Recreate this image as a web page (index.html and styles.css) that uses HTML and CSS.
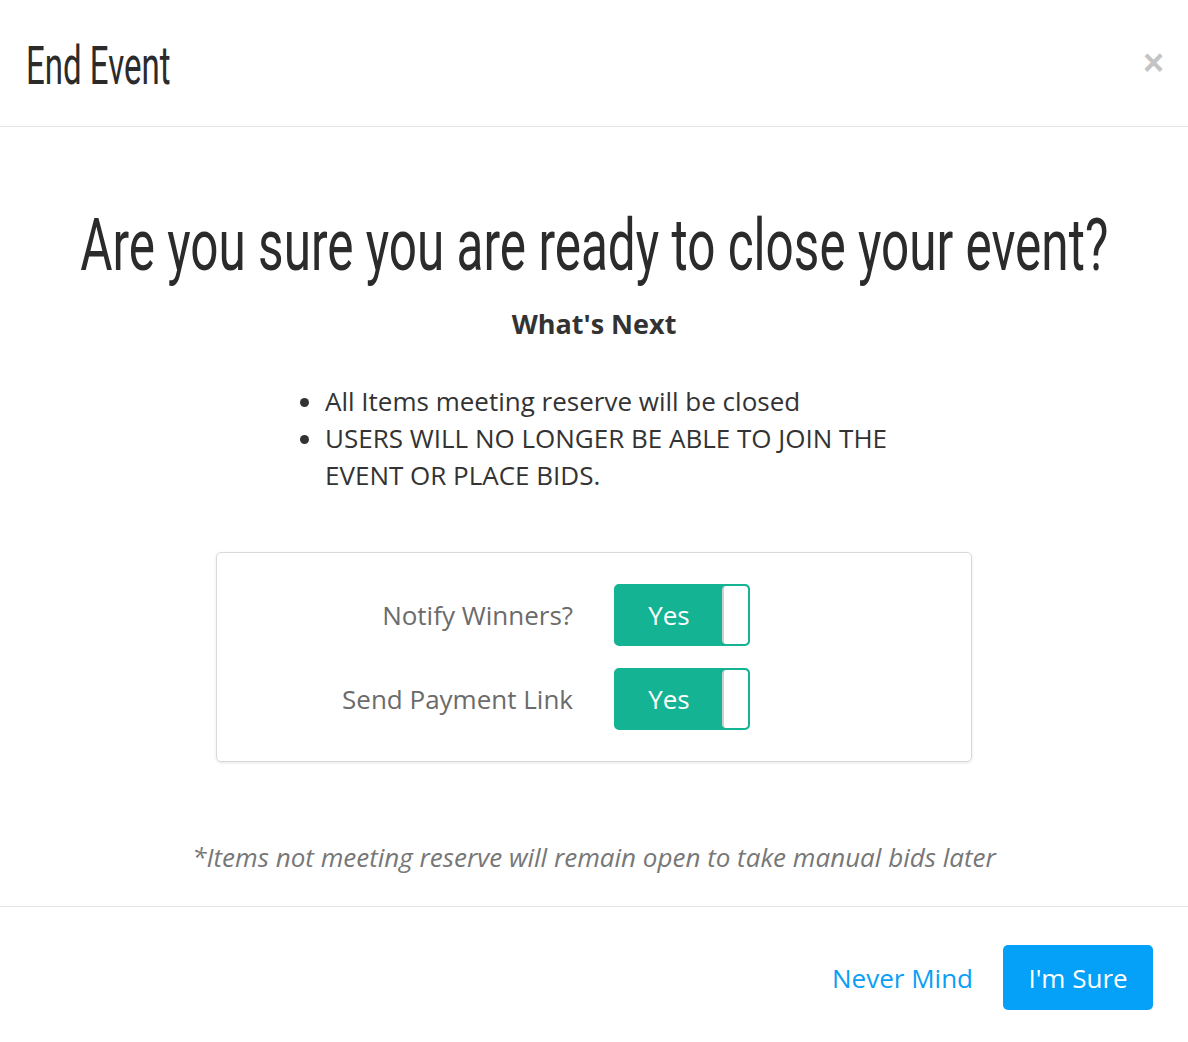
FILE: index.html
```html
<!DOCTYPE html>
<html>
<head>
    <title>End Event</title>
    <link rel="stylesheet" href="styles.css">
</head>
<body>
    <div class="modal">
        <div class="modal-header">
            <h2 class="modal-title"><span class="narrow">End Event</span></h2>
            <button class="close">&times;</button>
        </div>

        <div class="modal-body">
            <h1 class="confirm-title"><span class="narrow">Are you sure you are ready to close your event?</span></h1>
            <h4 class="next-title">What's Next</h4>

            <ul class="next-list">
                <li>All Items meeting reserve will be closed</li>
                <li>USERS WILL NO LONGER BE ABLE TO JOIN THE EVENT OR PLACE BIDS.</li>
            </ul>

            <div class="options">
                <div class="option-row">
                    <span class="option-label">Notify Winners?</span>
                    <div class="toggle">
                        <span class="toggle-on">Yes</span>
                        <span class="toggle-knob"></span>
                    </div>
                </div>
                <div class="option-row">
                    <span class="option-label">Send Payment Link</span>
                    <div class="toggle">
                        <span class="toggle-on">Yes</span>
                        <span class="toggle-knob"></span>
                    </div>
                </div>
            </div>

            <p class="footnote">*Items not meeting reserve will remain open to take manual bids later</p>
        </div>

        <div class="modal-footer">
            <button class="btn-link">Never Mind</button>
            <button class="btn-primary">I'm Sure</button>
        </div>
    </div>
</body>
</html>
```

FILE: styles.css
```css
body {
    margin: 0;
    font-family: "Open Sans", Arial, sans-serif;
    color: #333;
    background: #fff;
}

.modal { width: 1188px; }

.narrow {
    display: inline-block;
    white-space: nowrap;
    font-family: Roboto, "Liberation Sans", sans-serif;
    font-weight: 400;
}

.modal-header {
    display: flex;
    align-items: center;
    justify-content: space-between;
    height: 127px;
    padding: 3px 26px 0;
    box-sizing: border-box;
    border-bottom: 1px solid #e5e5e5;
}
.modal-title {
    margin: 0;
    font-size: 53px;
    font-weight: 400;
    color: #2b2b2b;
    line-height: 60px;
}
.modal-title .narrow {
    transform: scaleX(0.623);
    transform-origin: left center;
}
.close {
    border: none;
    background: none;
    padding: 0;
    margin: -3px -2px 0 0;
    font-family: Arial, sans-serif;
    font-size: 36px;
    font-weight: bold;
    color: #c4c4c4;
    cursor: pointer;
}

.modal-body {
    padding-top: 73px;
    text-align: center;
}
.confirm-title {
    display: flex;
    justify-content: center;
    margin: 0;
    font-size: 73px;
    font-weight: 400;
    line-height: 90px;
    color: #2b2b2b;
}
.confirm-title .narrow {
    transform: scaleX(0.678);
    transform-origin: center;
}
.next-title {
    margin: 16px 0 0;
    font-size: 27px;
    line-height: 36px;
    font-weight: bold;
    color: #333;
}
.next-list {
    width: 600px;
    margin: 41px auto 0;
    padding-left: 34px;
    box-sizing: border-box;
    text-align: left;
    font-size: 26px;
    line-height: 37px;
    color: #333;
    transform: translateX(-3px);
}

.options {
    width: 756px;
    margin: 58px auto 0;
    padding: 31px 0;
    border: 1px solid #d9d9d9;
    border-radius: 5px;
    box-shadow: 0 1px 3px rgba(0,0,0,0.1);
    box-sizing: border-box;
    display: flex;
    flex-direction: column;
    gap: 22px;
}
.option-row {
    display: grid;
    grid-template-columns: 356px 136px;
    column-gap: 41px;
    align-items: center;
}
.option-label {
    text-align: right;
    font-size: 26px;
    color: #6b6b6b;
}
.toggle {
    display: flex;
    height: 62px;
    border: 2px solid #14b393;
    border-radius: 5px;
    background: #14b393;
    box-sizing: border-box;
    overflow: hidden;
}
.toggle-on {
    flex: 1;
    display: flex;
    align-items: center;
    justify-content: center;
    color: #fff;
    font-size: 26px;
}
.toggle-knob {
    width: 24px;
    background: #fff;
    border-left: 2px solid #cfcfcf;
    border-radius: 4px 3px 3px 4px;
}

.footnote {
    margin: 77px 0 0;
    padding-bottom: 31px;
    font-size: 26px;
    line-height: 36px;
    font-style: italic;
    color: #777;
}

.modal-footer {
    display: flex;
    justify-content: flex-end;
    align-items: center;
    gap: 30px;
    padding: 38px 35px 31px;
    border-top: 1px solid #e5e5e5;
}
.btn-link {
    border: none;
    background: none;
    padding: 0;
    font-family: inherit;
    font-size: 26px;
    color: #0a9ff5;
    cursor: pointer;
}
.btn-primary {
    width: 150px;
    height: 65px;
    border: none;
    border-radius: 5px;
    background: #05a0f7;
    color: #fff;
    font-family: inherit;
    font-size: 26px;
    cursor: pointer;
}
```
